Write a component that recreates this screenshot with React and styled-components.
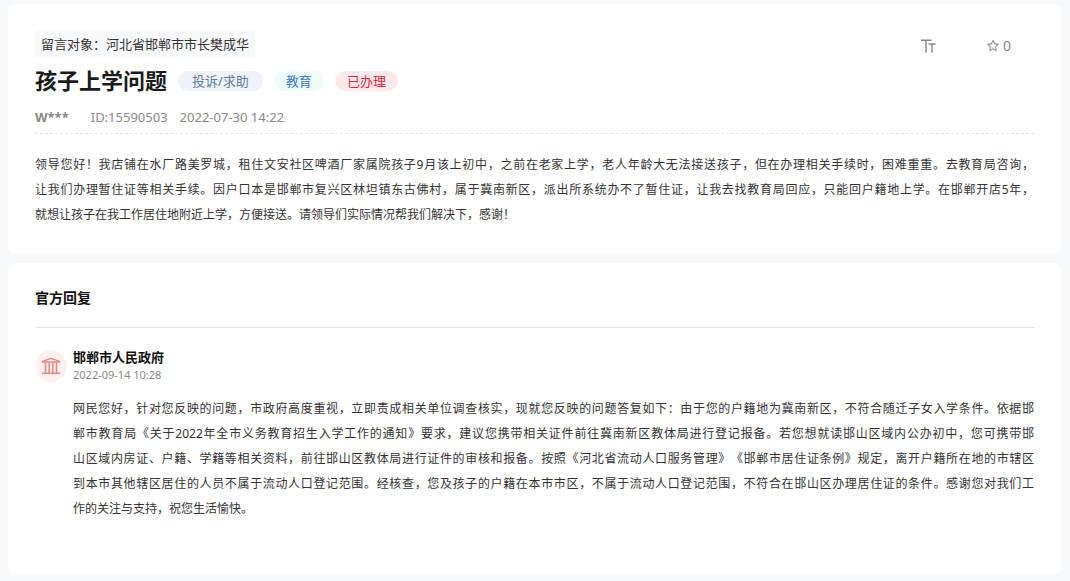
import styled, { createGlobalStyle } from "styled-components";
import { AiOutlineStar } from "react-icons/ai";

const GlobalStyle = createGlobalStyle`
  * {
    box-sizing: border-box;
    margin: 0;
    padding: 0;
  }

  body {
    background-color: #f7f8fa;
    color: #333;
    font-family: "Noto Sans", "Noto Sans CJK SC", sans-serif;
    font-size: 13px;
  }

  button {
    border: none;
    background: none;
    color: inherit;
    font: inherit;
    cursor: pointer;
  }
`;

const Page = styled.main`
  display: flex;
  flex-direction: column;
  gap: 9px;
  padding: 4px 9px 6px 8px;
`;

const Card = styled.section`
  background-color: #fff;
  border-radius: 8px;
  padding: ${(props) => props.$padding};
`;

const TopBar = styled.div`
  display: flex;
  justify-content: space-between;
  align-items: center;
`;

const Target = styled.div`
  padding: 0 6px;
  border-radius: 2px;
  background-color: #f7f8fa;
  line-height: 26px;
`;

const Actions = styled.div`
  display: flex;
  align-items: center;
  gap: 50px;
  padding: 4px 23px 0 0;
  color: #888;
`;

const IconButton = styled.button`
  display: flex;
  align-items: center;
  gap: 3px;
  font-size: 14px;
  line-height: 20px;
`;

const TitleRow = styled.div`
  display: flex;
  align-items: center;
  gap: 11px;
  padding-top: 8px;
`;

const Title = styled.h1`
  padding-bottom: 2px;
  color: #1a1a1a;
  font-size: 22px;
  line-height: 30px;
`;

const Tag = styled.span`
  padding: 0 ${(props) => (props.$wide ? 14 : 12)}px;
  border-radius: 10px;
  background-color: ${(props) => props.$bg};
  color: ${(props) => props.$color};
  line-height: 20px;
`;

const Meta = styled.div`
  display: flex;
  gap: 12px;
  padding: 10px 0 6px;
  border-bottom: 1px dashed #e4e4e4;
  color: #888;
  line-height: 20px;
`;

const Author = styled.strong`
  margin-right: 10px;
`;

const Paragraph = styled.p`
  font-size: 12px;
  line-height: 25px;
  text-spacing-trim: space-all;
`;

const Line = styled.span`
  display: block;
  text-align: justify;
  text-align-last: justify;

  &:last-child {
    text-align-last: left;
  }
`;

const Message = styled.div`
  padding-top: 18px;
`;

const SectionTitle = styled.h2`
  padding-bottom: 19px;
  border-bottom: 1px solid #e4e4e4;
  color: #111;
  font-size: 14px;
  line-height: 20px;
`;

const Reply = styled.article`
  display: grid;
  grid-template-columns: 32px 1fr;
  column-gap: 6px;
  padding-top: 20px;
`;

const Avatar = styled.div`
  display: flex;
  justify-content: center;
  align-items: center;
  width: 32px;
  height: 32px;
  margin-top: 2px;
  border-radius: 50%;
  background-color: #ffefee;
  color: #e48a87;
`;

const ReplyName = styled.h3`
  color: #111;
  font-size: 13px;
  line-height: 18px;
`;

const ReplyDate = styled.time`
  display: block;
  margin-bottom: 12px;
  color: #888;
  font-size: 11px;
  line-height: 18px;
`;

const messageLines = [
  "领导您好！我店铺在水厂路美罗城，租住文安社区啤酒厂家属院孩子9月该上初中，之前在老家上学，老人年龄大无法接送孩子，但在办理相关手续时，困难重重。去教育局咨询，",
  "让我们办理暂住证等相关手续。因户口本是邯郸市复兴区林坦镇东古佛村，属于冀南新区，派出所系统办不了暂住证，让我去找教育局回应，只能回户籍地上学。在邯郸开店5年，",
  "就想让孩子在我工作居住地附近上学，方便接送。请领导们实际情况帮我们解决下，感谢！",
];

const replyLines = [
  "网民您好，针对您反映的问题，市政府高度重视，立即责成相关单位调查核实，现就您反映的问题答复如下：由于您的户籍地为冀南新区，不符合随迁子女入学条件。依据邯",
  "郸市教育局《关于2022年全市义务教育招生入学工作的通知》要求，建议您携带相关证件前往冀南新区教体局进行登记报备。若您想就读邯山区域内公办初中，您可携带邯",
  "山区域内房证、户籍、学籍等相关资料，前往邯山区教体局进行证件的审核和报备。按照《河北省流动人口服务管理》《邯郸市居住证条例》规定，离开户籍所在地的市辖区",
  "到本市其他辖区居住的人员不属于流动人口登记范围。经核查，您及孩子的户籍在本市市区，不属于流动人口登记范围，不符合在邯山区办理居住证的条件。感谢您对我们工",
  "作的关注与支持，祝您生活愉快。",
];

function TextSizeIcon() {
  return (
    <svg width="16" height="14" viewBox="0 0 16 14" fill="none" stroke="currentColor" strokeWidth="1.5">
      <path d="M1 1.2H11.5M6 1.2V13.5M8.5 5H15.5M12 5V13.5" />
    </svg>
  );
}

function GovernmentIcon() {
  return (
    <svg width="20" height="18" viewBox="0 0 20 18" fill="none" stroke="currentColor">
      <path d="M1.5 5V4.4L10 1.4L18.5 4.4V5Z" strokeWidth="1.5" strokeLinejoin="round" />
      <path d="M4.5 5.5V16M8.2 5.5V16M11.8 5.5V16M15.5 5.5V16" strokeWidth="1.6" />
      <path d="M1 16.3H19" strokeWidth="1.5" />
    </svg>
  );
}

function Lines({ lines }) {
  return (
    <Paragraph>
      {lines.map((line) => (
        <Line key={line}>{line}</Line>
      ))}
    </Paragraph>
  );
}

export default function App() {
  return (
    <>
      <GlobalStyle />
      <Page lang="zh-CN">
        <Card $padding="27px">
          <TopBar>
            <Target>留言对象：河北省邯郸市市长樊成华</Target>
            <Actions>
              <IconButton aria-label="字号">
                <TextSizeIcon />
              </IconButton>
              <IconButton aria-label="收藏">
                <AiOutlineStar size={14} />
                <span>0</span>
              </IconButton>
            </Actions>
          </TopBar>
          <TitleRow>
            <Title>孩子上学问题</Title>
            <Tag $wide $bg="#eff3f9" $color="#647a9b">
              投诉/求助
            </Tag>
            <Tag $bg="#edfcfa" $color="#3b77c4">
              教育
            </Tag>
            <Tag $bg="#fbe9ea" $color="#da2840">
              已办理
            </Tag>
          </TitleRow>
          <Meta>
            <Author>W***</Author>
            <span>ID:15590503</span>
            <time>2022-07-30 14:22</time>
          </Meta>
          <Message>
            <Lines lines={messageLines} />
          </Message>
        </Card>

        <Card $padding="25px 27px 54px">
          <SectionTitle>官方回复</SectionTitle>
          <Reply>
            <Avatar>
              <GovernmentIcon />
            </Avatar>
            <div>
              <ReplyName>邯郸市人民政府</ReplyName>
              <ReplyDate>2022-09-14 10:28</ReplyDate>
              <Lines lines={replyLines} />
            </div>
          </Reply>
        </Card>
      </Page>
    </>
  );
}
